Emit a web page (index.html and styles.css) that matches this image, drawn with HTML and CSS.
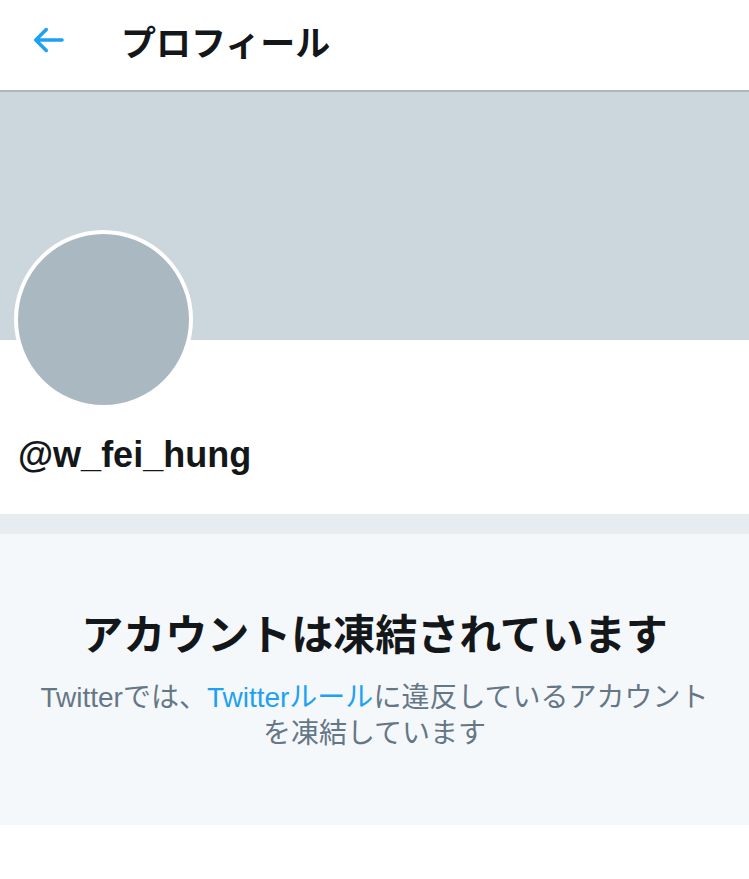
FILE: index.html
```html
<!DOCTYPE html>
<html lang="ja">
<head>
<meta charset="utf-8">
<title>プロフィール</title>
<link rel="stylesheet" href="styles.css">
</head>
<body>
<header class="topbar">
  <svg class="back" viewBox="0 0 24 24" aria-hidden="true"><path d="M20 11H7.414l4.293-4.293c.39-.39.39-1.023 0-1.414s-1.023-.39-1.414 0l-6 6c-.39.39-.39 1.023 0 1.414l6 6c.195.195.45.293.707.293s.512-.098.707-.293c.39-.39.39-1.023 0-1.414L7.414 13H20c.553 0 1-.447 1-1s-.447-1-1-1z"/></svg>
  <h1 class="title">プロフィール</h1>
</header>
<div class="banner"></div>
<section class="profile">
  <div class="avatar"></div>
  <div class="handle">@w_fei_hung</div>
</section>
<div class="divider"></div>
<section class="suspended">
  <h2 class="s-title">アカウントは凍結されています</h2>
  <p class="s-text">Twitterでは、<span class="link">Twitterルール</span>に違反しているアカウントを凍結しています</p>
</section>
</body>
</html>
```
FILE: styles.css
```css
* { box-sizing: border-box; }
html, body { margin: 0; padding: 0; background: #fff; }
body {
  font-family: "Liberation Sans", "Noto Sans CJK JP", sans-serif;
  color: #14171a;
}
.topbar {
  height: 92px;
  display: flex;
  align-items: center;
  border-bottom: 2px solid #b1b6ba;
  padding-bottom: 10px;
}
.back {
  width: 42px;
  height: 42px;
  fill: #1da1f2;
  margin-left: 27px;
  flex: none;
}
.title {
  margin: 0 0 0 52px;
  font-family: "Noto Sans CJK JP", sans-serif;
  font-size: 35px;
  font-weight: 700;
  line-height: 1;
}
.banner {
  height: 248px;
  background: #ccd6dd;
}
.profile {
  display: flow-root;
  height: 174px;
  padding: 0 14px;
}
.avatar {
  width: 179px;
  height: 179px;
  margin-top: -110px;
  border-radius: 50%;
  background: #aab8c2;
  border: 4px solid #fff;
}
.handle {
  margin: 26px 0 0 4px;
  font-size: 36px;
  font-weight: 700;
  line-height: 40px;
}
.divider {
  height: 20px;
  background: #e6ecf0;
}
.suspended {
  height: 291px;
  background: #f5f8fa;
  padding: 72px 30px 0;
  text-align: center;
}
.s-title {
  margin: 0;
  font-family: "Noto Sans CJK JP", sans-serif;
  font-size: 42px;
  font-weight: 700;
  line-height: 52px;
}
.s-text {
  margin: 22px auto 0;
  max-width: 680px;
  font-size: 28px;
  line-height: 36px;
  color: #657786;
}
.link { color: #1da1f2; }
```
